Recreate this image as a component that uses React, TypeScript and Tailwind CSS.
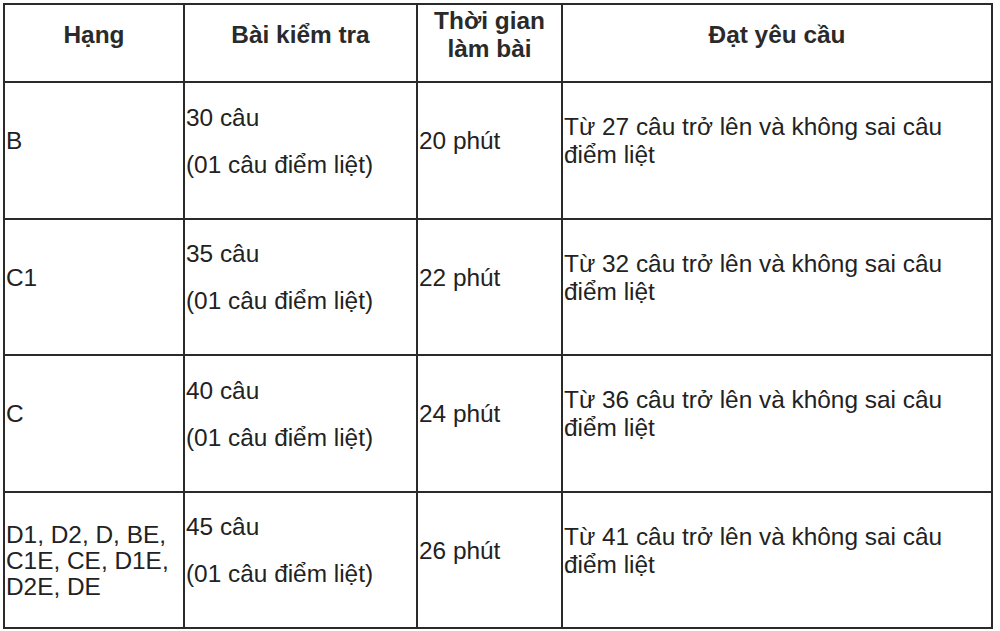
const rows = [
  { hang: ["B"], bai: "30 câu", time: "20 phút", dat: "Từ 27 câu trở lên và không sai câu điểm liệt" },
  { hang: ["C1"], bai: "35 câu", time: "22 phút", dat: "Từ 32 câu trở lên và không sai câu điểm liệt" },
  { hang: ["C"], bai: "40 câu", time: "24 phút", dat: "Từ 36 câu trở lên và không sai câu điểm liệt" },
  {
    hang: ["D1, D2, D, BE,", "C1E, CE, D1E,", "D2E, DE"],
    bai: "45 câu",
    time: "26 phút",
    dat: "Từ 41 câu trở lên và không sai câu điểm liệt",
  },
]

const heights = ["h-[137px]", "h-[136px]", "h-[137px]", "h-[136px]"]

export default function App() {
  return (
    <div className="min-h-screen bg-white pl-[3px] pt-[3px] font-['Liberation_Sans',Arial,sans-serif] text-[24.4px] leading-[28px] text-[#222]">
      <table className="w-[988px] table-fixed border-collapse border-2 border-[#2a2a2a]">
        <colgroup>
          <col className="w-[180px]" />
          <col className="w-[233px]" />
          <col className="w-[145px]" />
          <col className="w-[430px]" />
        </colgroup>
        <thead>
          <tr className="h-[78px]">
            <HeadCell>Hạng</HeadCell>
            <HeadCell>Bài kiểm tra</HeadCell>
            <HeadCell>
              Thời gian
              <br />
              làm bài
            </HeadCell>
            <HeadCell>Đạt yêu cầu</HeadCell>
          </tr>
        </thead>
        <tbody>
          {rows.map((r, i) => (
            <tr key={i} className={heights[i]}>
              <td className="border-2 border-[#2a2a2a] p-0 pl-px align-middle">
                {r.hang.length > 1 ? (
                  <div className="pt-[2px]">
                    {r.hang.map((l) => (
                      <div key={l} className="leading-[26px]">{l}</div>
                    ))}
                  </div>
                ) : (
                  <p className="mb-[19px]">{r.hang[0]}</p>
                )}
              </td>
              <td className="border-2 border-[#2a2a2a] p-0 pl-px align-middle">
                <p className="mb-[19px]">{r.bai}</p>
                <p className="mb-[19px]">(01 câu điểm liệt)</p>
              </td>
              <td className="border-2 border-[#2a2a2a] p-0 pl-px align-middle">
                <p className="mb-[19px]">{r.time}</p>
              </td>
              <td className="border-2 border-[#2a2a2a] p-0 pl-px pr-8 align-middle">
                <p className="mb-[19px]">{r.dat}</p>
              </td>
            </tr>
          ))}
        </tbody>
      </table>
    </div>
  )
}

function HeadCell({ children }: { children: React.ReactNode }) {
  return (
    <th className="border-2 border-[#2a2a2a] p-0 pb-[17px] text-center align-middle font-bold text-[#2a2a2a]">
      {children}
    </th>
  )
}
